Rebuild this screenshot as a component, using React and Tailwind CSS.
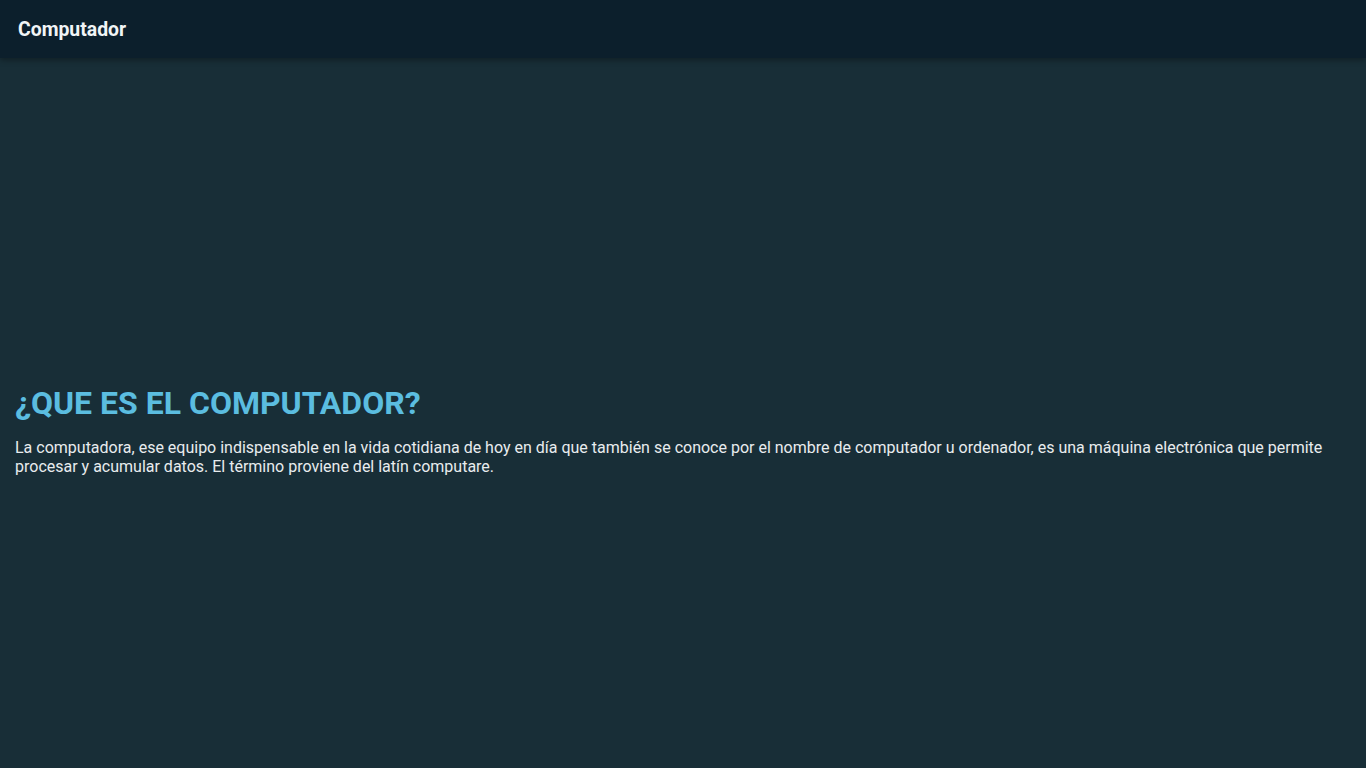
export default function App() {
  return (
    <div className="min-h-screen bg-[#182e37] font-['Roboto',sans-serif]">
      <header className="h-[58px] bg-[#0c1f2c] flex items-center px-[18px] pt-[2px] shadow-[0_2px_6px_rgba(0,0,0,0.35)]">
        <h1 className="text-[19.4px] font-bold text-[#f1f4f6]">Computador</h1>
      </header>
      <main className="px-[15px] pt-[326px]">
        <h2 className="text-[32px] font-bold text-[#5bbde0] leading-[38px]">¿QUE ES EL COMPUTADOR?</h2>
        <p className="mt-[16px] text-[16px] leading-[19px] text-[#e8ecee]">
          La computadora, ese equipo indispensable en la vida cotidiana de hoy en día que también se conoce por el nombre de computador u ordenador, es una máquina electrónica que permite procesar y acumular datos. El término proviene del latín computare.
        </p>
      </main>
    </div>
  );
}
